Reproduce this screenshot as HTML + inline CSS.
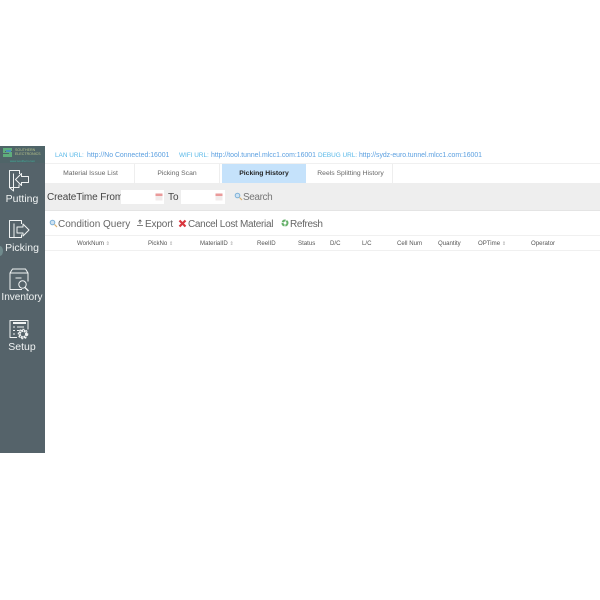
<!DOCTYPE html>
<html>
<head>
<meta charset="utf-8">
<style>
html,body{margin:0;padding:0;background:#fff;width:600px;height:600px;overflow:hidden}
body{font-family:"Liberation Sans",sans-serif;position:relative}
#wrap{position:absolute;left:0;top:0;width:600px;height:600px;filter:blur(.25px)}
.a{position:absolute;white-space:nowrap}
#side{left:0;top:146px;width:45px;height:307px;background:#55636a}
.nav{color:#f0f3f3;font-size:10.5px;width:44px;text-align:center;left:0}
.url{top:151px;font-size:6.9px;color:#5a9fe0;line-height:9px}
.lab{color:#58b8e8;font-size:6.4px}
.tab{top:164px;height:19px;line-height:20px;text-align:center;font-size:6.8px;color:#666;background:#fff}
.tool{top:218px;font-size:10px;color:#666;line-height:13px}
.th{top:239px;font-size:6.1px;color:#555;line-height:9px}
.th i{font-style:normal;color:#aaa;font-size:5px}
.cal{background:#f3ecec}
</style>
</head>
<body>
<div id="wrap">
<div class="a" id="side"></div>
<div class="a" style="left:0;top:146px;width:45px;height:17px;background:#4f6468"></div>
<svg class="a" style="left:2px;top:147px" width="11" height="11"><path d="M1 1h9v3H3v1h7v5H1V7h6V6H1z" fill="#5fae7c"/><path d="M4 3h5v2H4z" fill="#4a8fb8"/></svg>
<div class="a" style="left:15px;top:148px;font-size:3.6px;line-height:4px;color:#b8c48a">SOUTHERN<br>ELECTRONICS</div>
<div class="a" style="left:0;top:159px;width:45px;text-align:center;font-size:3px;line-height:4px;color:#3fb09c">www.southern.com</div>
<div class="a" style="left:-3px;top:246px;width:6px;height:10px;border-radius:50%;background:#6f8a8c"></div>

<svg class="a" style="left:0;top:146px" width="45" height="220" viewBox="0 0 45 220" fill="none" stroke="#f0f3f3" stroke-width="1" stroke-linejoin="round">
  <!-- Putting -->
  <path d="M19.500 28v-3.500h-10v17h9.500v-3"/>
  <path d="M13.500 27.500v17.500l-4-3.500"/>
  <path d="M28.500 30.500h-7v-3l-6 6 6 6v-3h7z"/>
  <!-- Picking -->
  <path d="M21.500 78v-3.500h-12v17h12v-3"/>
  <path d="M14 77.500v14"/>
  <path d="M17 81h6v-3l6 6-6 6v-3h-6z"/>
  <!-- Inventory -->
  <path d="M22 143.500H10v-16.500l2.500-4h13l2.500 4v8.500M10 127h18M15.500 132h6"/>
  <circle cx="22.500" cy="138.500" r="3.700"/>
  <path d="M25 141.500l3.500 3.500" stroke-width="1.300"/>
  <!-- Setup -->
  <path d="M17 191.500h-7v-17h18v9"/>
  <path d="M13 177h13" stroke-width="2"/>
  <path d="M13 181h2M13 184.500h2M13 188h2M17 181h7M17 184.500h2"/>
  <circle cx="23" cy="188" r="3.300" stroke-width="2.400" stroke-dasharray="2 .7"/>
  <circle cx="23" cy="188" r="4.700" stroke-width="1.200" stroke-dasharray="1.800 1.800"/>
</svg>

<div class="a nav" style="top:193px">Putting</div>
<div class="a nav" style="top:242px">Picking</div>
<div class="a nav" style="top:292px;font-size:10px">Inventory</div>
<div class="a nav" style="top:341px">Setup</div>

<div class="a url" style="left:55px"><span class="lab">LAN URL:</span></div>
<div class="a url" style="left:87px">http://No Connected:16001</div>
<div class="a url" style="left:179px"><span class="lab">WIFI URL:</span></div>
<div class="a url" style="left:211px">http://tool.tunnel.mlcc1.com:16001</div>
<div class="a url" style="left:318px"><span class="lab">DEBUG URL:</span></div>
<div class="a url" style="left:359px;letter-spacing:-.03px">http://sydz-euro.tunnel.mlcc1.com:16001</div>

<div class="a" style="left:45px;top:163px;width:555px;height:1px;background:#f0f0f0"></div>
<div class="a tab" style="left:47px;width:87px;border-right:1px solid #eee">Material Issue List</div>
<div class="a tab" style="left:135px;width:84px;border-right:1px solid #eee">Picking Scan</div>
<div class="a tab" style="left:222px;width:84px;background:#c5e2fb;color:#222;font-weight:bold;font-size:6.8px">Picking History</div>
<div class="a tab" style="left:309px;width:83px;border-right:1px solid #eee">Reels Splitting History</div>

<div class="a" style="left:45px;top:183px;width:555px;height:27px;background:#eeeeee"></div>
<div class="a" style="left:45px;top:210px;width:555px;height:1px;background:#e4e4e4"></div>
<div class="a" style="left:47px;top:191px;font-size:10px;letter-spacing:-.13px;line-height:13px;color:#444">CreateTime From</div>
<div class="a" style="left:121px;top:190px;width:43px;height:14px;background:#fff"></div>
<div class="a" style="left:168px;top:191px;font-size:10px;line-height:13px;color:#444">To</div>
<div class="a" style="left:181px;top:190px;width:44px;height:14px;background:#fff"></div>
<svg class="a" style="left:155px;top:193px" width="8" height="8"><rect x=".5" y=".5" width="7" height="7" fill="#f1ebeb"/><rect x=".5" y=".5" width="7" height="2.500" fill="#ea9a9a"/></svg>
<svg class="a" style="left:215px;top:193px" width="8" height="8"><rect x=".5" y=".5" width="7" height="7" fill="#f1ebeb"/><rect x=".5" y=".5" width="7" height="2.500" fill="#ea9a9a"/></svg>
<svg class="a" style="left:234px;top:192px" width="9" height="9" fill="none"><circle cx="3.500" cy="3.500" r="2.300" fill="#cfe3f2" stroke="#7fb2d8" stroke-width="1"/><path d="M5.500 5.500l2.500 2.500" stroke="#d8b070" stroke-width="1.200"/></svg>
<div class="a" style="left:243px;top:191px;font-size:10px;letter-spacing:-.4px;line-height:13px;color:#777">Search</div>

<svg class="a" style="left:49px;top:219px" width="9" height="9" fill="none"><circle cx="3.500" cy="3.500" r="2.300" fill="#cfe3f2" stroke="#7fb2d8" stroke-width="1"/><path d="M5.500 5.500l2.500 2.500" stroke="#d8b070" stroke-width="1.200"/></svg>
<div class="a tool" style="left:58px">Condition Query</div>
<svg class="a" style="left:136px;top:219px" width="8" height="8" fill="none" stroke="#555" stroke-width=".8"><path d="M4 1v4M2.500 2.500L4 1l1.500 1.500M1 6.500h6"/></svg>
<div class="a tool" style="left:145px;letter-spacing:-.15px">Export</div>
<svg class="a" style="left:178px;top:219px" width="9" height="9" fill="none" stroke="#d9363e" stroke-width="2.200"><path d="M1.500 1.500l6 6M7.500 1.500l-6 6"/></svg>
<div class="a tool" style="left:188px;letter-spacing:-.3px">Cancel Lost Material</div>
<svg class="a" style="left:281px;top:219px" width="8" height="8" fill="none" stroke="#66b06a" stroke-width="2"><circle cx="4" cy="4" r="2.500" stroke-dasharray="3.500 .8"/></svg>
<div class="a tool" style="left:290px;letter-spacing:-.35px">Refresh</div>

<div class="a" style="left:45px;top:235px;width:555px;height:1px;background:#f0f0f0"></div>
<div class="a" style="left:45px;top:250px;width:555px;height:1px;background:#f0f0f0"></div>
<div class="a th" style="left:77px">WorkNum <i>⇕</i></div>
<div class="a th" style="left:148px">PickNo <i>⇕</i></div>
<div class="a th" style="left:200px">MaterialID <i>⇕</i></div>
<div class="a th" style="left:257px">ReelID</div>
<div class="a th" style="left:298px">Status</div>
<div class="a th" style="left:330px">D/C</div>
<div class="a th" style="left:362px">L/C</div>
<div class="a th" style="left:397px">Cell Num</div>
<div class="a th" style="left:438px">Quantity</div>
<div class="a th" style="left:478px">OPTime <i>⇕</i></div>
<div class="a th" style="left:531px">Operator</div>
</div>
</body>
</html>
